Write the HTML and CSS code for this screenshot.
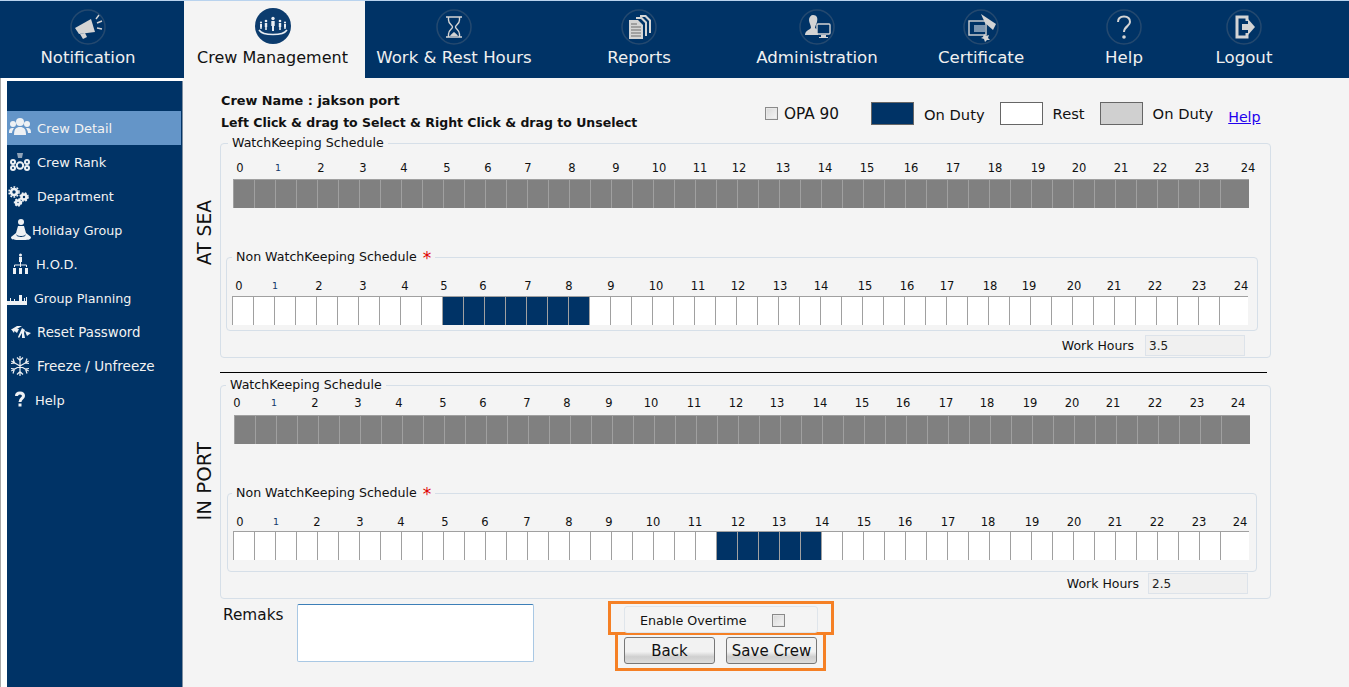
FILE: index.html
```html
<!DOCTYPE html>
<html lang="en">
<head>
    <meta charset="UTF-8">
    <meta name="viewport" content="width=device-width, initial-scale=1.0">
    <title>Crew Management</title>
    <link rel="stylesheet" href="styles.css">
</head>
<body>
    <!-- Top navigation -->
    <nav class="topnav">
        <a class="nav-item nav-notification">
            <svg class="nav-icon" viewBox="0 0 36 36"><circle class="ring" cx="18" cy="18" r="17"/><path class="fill" d="M5 19 21 10 25 23 9 25Z"/><path class="fill" d="M10 25 15 24 17 28 13 30Z"/><path class="line" d="M26 10 29 6M27 14 32 12M27 19 32 20"/></svg>
            <span>Notification</span>
        </a>
        <a class="nav-item nav-crew active">
            <svg class="nav-icon" viewBox="0 0 36 36"><circle class="disc" cx="18" cy="18" r="18"/><g class="people"><circle cx="18" cy="10.5" r="1.7"/><path d="M16.300 13H19.700V18H19V23H17V18H16.300Z"/><circle cx="11" cy="13" r="1.3"/><path d="M9.800 15H12.200V19H11.800V22H10.200V19H9.800Z"/><circle cx="25" cy="13" r="1.300"/><path d="M23.800 15H26.200V19H25.800V22H24.200V19H23.800Z"/><circle cx="6" cy="14.500" r="1.100"/><path d="M5 16H7V19.500H6.700V21H5.300V19.500H5Z"/><circle cx="30" cy="14.500" r="1.100"/><path d="M29 16H31V19.500H30.700V21H29.300V19.500H29Z"/></g><path class="arc" d="M4 22C8 28 28 28 32 22"/></svg>
            <span>Crew Management</span>
        </a>
        <a class="nav-item nav-work">
            <svg class="nav-icon" viewBox="0 0 36 36"><circle class="ring" cx="18" cy="18" r="17"/><path class="line" d="M10 8H26M10 28H26M12.500 8V11C12.500 15 16.500 16 16.500 18C16.500 20 12.500 21 12.500 25V28M23.500 8V11C23.500 15 19.500 16 19.500 18C19.500 20 23.500 21 23.500 25V28"/><path class="fill" d="M14 27C15 25 17 24 18 23 19 24 21 25 22 27Z"/></svg>
            <span>Work &amp; Rest Hours</span>
        </a>
        <a class="nav-item nav-reports">
            <svg class="nav-icon" viewBox="0 0 36 36"><circle class="ring" cx="18" cy="18" r="17"/><path class="fill" d="M19 6H25L30 11V24H28V12L24 8H19Z"/><path class="fill" d="M15 8H21L26 13V27H24V14L20 10H15Z"/><path class="fill" d="M8 11H17L22 16V30H8Z"/><path class="cut" d="M10 15H16M10 18H20M10 21H20M10 24H20M10 27H20"/></svg>
            <span>Reports</span>
        </a>
        <a class="nav-item nav-admin">
            <svg class="nav-icon" viewBox="0 0 36 36"><circle class="ring" cx="18" cy="18" r="17"/><path class="fill" d="M14 6C18 6 19 9 18 13 17 16 16 17 16 19L19 21V26H6C6 22 10 21 12 19 12 16 10 14 10 11 10 8 12 6 14 6Z"/><rect class="screen" x="18" y="15" width="13" height="10" rx="1"/><path class="fill" d="M22 26H27V28H29V29H20V28H22Z"/></svg>
            <span>Administration</span>
        </a>
        <a class="nav-item nav-cert">
            <svg class="nav-icon" viewBox="0 0 36 36"><circle class="ring" cx="18" cy="18" r="17"/><rect class="screen" x="6" y="12" width="17" height="14"/><path class="dim" d="M11 16H22V23H11Z"/><path class="fill" d="M18 5 33 15 30 21 22 14Z"/><path class="fill" d="M21 25 23 27 26 26 25 29 27 31 24 31 22 33 21 30 18 29 20 28Z"/></svg>
            <span>Certificate</span>
        </a>
        <a class="nav-item nav-help">
            <svg class="nav-icon" viewBox="0 0 36 36"><circle class="ring" cx="18" cy="18" r="17"/><path class="question" d="M12 13C12 9 15 7.500 18 7.500 22 7.500 24 10 24 13 24 17 18 17.500 18 23"/><circle class="fill" cx="18" cy="28" r="1.800"/></svg>
            <span>Help</span>
        </a>
        <a class="nav-item nav-logout">
            <svg class="nav-icon" viewBox="0 0 36 36"><circle class="ring" cx="18" cy="18" r="17"/><path class="door" d="M21 12V8H11V28H21V24"/><path class="fill" d="M16 15H22V10L29 18 22 26V21H16Z"/></svg>
            <span>Logout</span>
        </a>
    </nav>

    <div class="page">
        <!-- Side menu -->
        <div class="side-wrap">
            <ul class="side-menu">
                <li class="side-item active">
                    <svg class="side-icon" viewBox="0 0 24 24"><circle cx="12" cy="6" r="4"/><circle cx="5" cy="8" r="3"/><circle cx="19" cy="8" r="3"/><path d="M6 19C6 13 8 11 12 11 16 11 18 13 18 19Z"/><path d="M1 17C1 13 2 12 5 12L6 12C5 14 4 15 4 17Z"/><path d="M23 17C23 13 22 12 19 12L18 12C19 14 20 15 20 17Z"/></svg>
                    <span>Crew Detail</span>
                </li>
                <li class="side-item">
                    <svg class="side-icon" viewBox="0 0 24 24"><path class="dim" d="M9 3H15L14 8H10Z"/><circle class="hole" cx="12" cy="15.500" r="3.200"/><circle class="hole" cx="5" cy="12" r="2"/><circle class="hole" cx="19" cy="12" r="2"/><circle class="hole" cx="5" cy="18" r="2"/><circle class="hole" cx="19" cy="18" r="2"/></svg>
                    <span>Crew Rank</span>
                </li>
                <li class="side-item narrow-text">
                    <svg class="side-icon" viewBox="0 0 24 24"><g class="gear"><circle cx="6" cy="8" r="3"/><circle class="teeth" cx="6" cy="8" r="5"/></g><g class="gear"><circle cx="16" cy="13" r="2.500"/><circle class="teeth" cx="16" cy="13" r="4"/></g><g class="gear"><circle cx="10" cy="18.500" r="2"/><circle class="teeth" cx="10" cy="18.500" r="3.400"/></g></svg>
                    <span>Department</span>
                </li>
                <li class="side-item tight-item narrow-text">
                    <svg class="side-icon" viewBox="0 0 24 24"><circle cx="13" cy="4" r="3"/><path d="M10 8H16L18 15 23 19C23 22 20 22 13 22 6 22 3 22 3 19L8 15Z"/><path class="side-cut" d="M8.500 17C10 19 16 19 17.500 17"/></svg>
                    <span>Holiday Group</span>
                </li>
                <li class="side-item hod-item">
                    <svg class="side-icon" viewBox="0 0 24 24"><circle cx="12.500" cy="3" r="1.500"/><rect x="11" y="5" width="3" height="5"/><path class="stem" d="M12.500 10V13M6.500 15V13H18.500V15M12.500 13V15"/><rect x="5" y="16" width="3" height="6"/><rect x="11" y="16" width="3" height="6"/><rect x="17" y="16" width="3" height="6"/></svg>
                    <span>H.O.D.</span>
                </li>
                <li class="side-item plan-item narrow-text">
                    <svg class="side-icon" viewBox="0 0 24 24"><path d="M0 15 3 15 3 12 4 12 4 15 7 15 7 13 8 13 8 15 12 15 12 9 15 9 15 15 17 15 17 12 18 12 18 15 19 15 19 11 20 11 20 15 20 19H0Z"/></svg>
                    <span>Group Planning</span>
                </li>
                <li class="side-item wide-text">
                    <svg class="side-icon" viewBox="0 0 24 24"><path d="M4 9 9 6 14 6 9 9 11 9 9 13Z"/><path d="M3 9 7 9 6 13Z"/><path d="M14 8 17 10 16 13 17 18 14 18 14 13 11 18 10 17Z"/><path d="M17 11 23 13 19 16Z"/></svg>
                    <span>Reset Password</span>
                </li>
                <li class="side-item wider-text">
                    <svg class="side-icon" viewBox="0 0 24 24"><path class="flake" d="M12 2V22M3.300 7 20.700 17M3.300 17 20.700 7M9 3.500 12 6.500 15 3.500M9 20.500 12 17.500 15 20.500M5 4.500 6.500 9 3 9.500M19 4.500 17.500 9 21 9.500M5 19.500 6.500 15 3 14.500M19 19.500 17.500 15 21 14.500"/></svg>
                    <span>Freeze / Unfreeze</span>
                </li>
                <li class="side-item help-item">
                    <svg class="side-icon" viewBox="0 0 24 24"><path class="side-question" d="M8.500 8C8.500 6 10 5 12 5 14.500 5 15.500 6.500 15.500 8 15.500 10.500 12 10.500 12 14"/><rect x="10.500" y="15.500" width="3" height="3"/></svg>
                    <span>Help</span>
                </li>
            </ul>
        </div>

        <!-- Schedule form -->
        <main class="content">
            <div class="form-head">
                <div class="crew-info">
                    <p class="crew-name">Crew Name : jakson port</p>
                    <p class="crew-hint">Left Click &amp; drag to Select &amp; Right Click &amp; drag to Unselect</p>
                </div>
                <div class="key">
                    <label class="opa"><input type="checkbox" class="check"> OPA 90</label>
                    <span class="swatch swatch-duty"></span>
                    <span class="key-text">On Duty</span>
                    <span class="swatch swatch-rest"></span>
                    <span class="key-text key-up">Rest</span>
                    <span class="swatch swatch-grey"></span>
                    <span class="key-text key-up">On Duty</span>
                    <a class="help-link" href="#">Help</a>
                </div>
            </div>

            <section class="block block-sea">
                <div class="block-title">AT SEA</div>
                <fieldset class="outer">
                    <legend>WatchKeeping Schedule</legend>
                    <div class="schedule schedule-sea-watch" data-key="seaWatch"></div>
                    <fieldset class="inner inner-sea">
                        <legend>Non WatchKeeping Schedule <span class="req">*</span></legend>
                        <div class="schedule schedule-sea-non" data-key="seaNon"></div>
                    </fieldset>
                    <div class="hours hours-sea">
                        <span>Work Hours</span>
                        <input type="text" value="3.5" readonly>
                    </div>
                </fieldset>
            </section>

            <hr class="divider">

            <section class="block block-port">
                <div class="block-title">IN PORT</div>
                <fieldset class="outer">
                    <legend>WatchKeeping Schedule</legend>
                    <div class="schedule schedule-port-watch" data-key="portWatch"></div>
                    <fieldset class="inner inner-port">
                        <legend>Non WatchKeeping Schedule <span class="req">*</span></legend>
                        <div class="schedule schedule-port-non" data-key="portNon"></div>
                    </fieldset>
                    <div class="hours hours-port">
                        <span>Work Hours</span>
                        <input type="text" value="2.5" readonly>
                    </div>
                </fieldset>
            </section>

            <div class="form-foot">
                <label class="remarks-label" for="remarks">Remaks</label>
                <textarea id="remarks" class="remarks"></textarea>
                <div class="actions">
                    <div class="mark mark-overtime">
                        <label class="overtime">Enable Overtime <input type="checkbox" class="check"></label>
                    </div>
                    <div class="mark mark-buttons">
                        <button type="button">Back</button>
                        <button type="button">Save Crew</button>
                    </div>
                </div>
            </div>
        </main>
    </div>

    <script src="schedule.js"></script>
</body>
</html>
```

FILE: styles.css
```css
* {
    box-sizing: border-box;
}

body {
    font-family: "DejaVu Sans", Verdana, sans-serif;
    font-size: 13px;
    color: #111;
    background-color: #f4f4f4;
    margin: 0;
    height: 687px;
    overflow: hidden;
}

/* Top navigation */
.topnav {
    display: flex;
    height: 78px;
    background-color: #003366;
    border-top: 1px solid #b9d3ee;
}

.nav-item {
    display: flex;
    flex-direction: column;
    align-items: center;
    flex: none;
    padding-top: 8px;
    color: #f0f0f0;
    font-size: 16.6px;
}

.nav-item span {
    margin-top: 1px;
    line-height: 24px;
    white-space: nowrap;
}

.nav-item.active {
    background-color: #f4f4f4;
    color: #111;
    font-size: 16px;
    padding-top: 7px;
}

.nav-item.active span {
    margin-top: 2px;
}

.nav-notification { width: 184px; padding-right: 8px; }
.nav-crew { width: 181px; padding-right: 4px; }
.nav-work { width: 178px; }
.nav-reports { width: 192px; }
.nav-admin { width: 164px; }
.nav-cert { width: 164px; }
.nav-help { width: 122px; }
.nav-logout { width: 118px; }

.nav-icon {
    width: 36px;
    height: 36px;
}

.ring {
    fill: none;
    stroke: #24496f;
    stroke-width: 1.5;
}

.disc { fill: #0c3c6e; }
.people { fill: #e8edf2; }
.arc { fill: none; stroke: #e8edf2; stroke-width: 1.5; }
.fill { fill: #d4d4d4; }
.line { fill: none; stroke: #d4d4d4; stroke-width: 1.4; }
.cut { fill: none; stroke: #6c6c6c; stroke-width: 1; }
.screen { fill: #003366; stroke: #d4d4d4; stroke-width: 1.4; }
.dim { fill: #7d96b0; }
.question { fill: none; stroke: #d4d4d4; stroke-width: 2; }
.door { fill: none; stroke: #d4d4d4; stroke-width: 3; }

/* Side menu */
.page {
    display: flex;
    height: 609px;
}

.side-wrap {
    flex: none;
    width: 183px;
    padding: 3px 0 0 6px;
    background-color: #fff;
    border-left: 1px solid #a8a8a8;
}

.side-menu {
    list-style: none;
    margin: 0;
    padding: 30px 0 0;
    height: 100%;
    background-color: #003366;
    border-right: 1px solid #7e8ea0;
}

.side-item {
    display: flex;
    align-items: center;
    height: 34px;
    padding-left: 1px;
    color: #f2f2f2;
    font-size: 13px;
    white-space: nowrap;
}

.side-item.active {
    background-color: #6495c8;
    margin-right: 1px;
}

.side-item.narrow-text { font-size: 12.7px; }
.side-item.wide-text { font-size: 13.3px; }
.side-item.wider-text { font-size: 13.5px; }

.side-item span { margin-left: 5px; }
.tight-item span { margin-left: 0; }
.hod-item span { margin-left: 4px; }
.plan-item { padding-left: 0; }
.plan-item span { margin-left: 3px; }
.help-item span { margin-left: 3px; }

.side-icon {
    flex: none;
    width: 24px;
    height: 24px;
    fill: #eef1f4;
}

.side-icon .dim { fill: #8fa3b8; }
.side-icon .hole { fill: none; stroke: #eef1f4; stroke-width: 2; }
.side-icon .stem { fill: none; stroke: #eef1f4; stroke-width: 1; }
.side-icon .side-cut { fill: none; stroke: #003366; stroke-width: 1; }
.side-icon .gear circle { fill: none; stroke: #eef1f4; stroke-width: 2.6; }
.side-icon .gear .teeth { stroke-width: 1.6; stroke-dasharray: 1.8 1.4; }
.side-icon .flake { fill: none; stroke: #eef1f4; stroke-width: 1.2; }
.side-icon .side-question { fill: none; stroke: #eef1f4; stroke-width: 3; }

/* Form */
.content {
    flex: 1;
    min-width: 0;
    padding: 12px 0 0 12px;
}

.form-head {
    display: flex;
    height: 45px;
    padding-left: 26px;
}

.crew-info {
    flex: none;
    width: 544px;
}

.crew-info p {
    margin: 0;
    font-weight: bold;
    line-height: 22px;
    white-space: nowrap;
}

.crew-name { font-size: 12.85px; }
.crew-hint { font-size: 12.5px; }

.key {
    display: flex;
    align-items: flex-start;
    padding-top: 12px;
}

.opa {
    display: flex;
    align-items: center;
    gap: 6px;
    flex: none;
    width: 106px;
    height: 23px;
    font-size: 15.3px;
    white-space: nowrap;
}

.check {
    appearance: none;
    width: 13px;
    height: 13px;
    margin: 0;
    border: 1px solid #8a8a8a;
    background: linear-gradient(135deg, #d8d8d8, #f6f6f6);
    box-shadow: inset 0 0 0 1px #e8e8e8;
}

.swatch {
    flex: none;
    width: 43px;
    height: 23px;
    border: 1px solid #666;
}

.swatch-duty { background-color: #003366; }
.swatch-rest { background-color: #fff; }
.swatch-grey { background-color: #d0d0d0; }

.key-text {
    flex: none;
    font-size: 14.7px;
    line-height: 26px;
    margin: 0 15px 0 10px;
    white-space: nowrap;
}

.key-text.key-up { line-height: 23px; }

.help-link {
    color: #2200ee;
    font-size: 14.2px;
    line-height: 30px;
}

/* AT SEA / IN PORT blocks */
.block {
    display: flex;
    align-items: flex-start;
}

.block-title {
    flex: none;
    width: 25px;
    writing-mode: vertical-rl;
    transform: rotate(180deg);
    line-height: 20px;
    text-align: left;
    white-space: nowrap;
}

.block-sea .block-title { margin-top: 65px; font-size: 18.7px; }
.block-port .block-title { margin-top: 65px; font-size: 19.7px; }

.outer,
.inner {
    margin: 0;
    padding: 0;
    min-width: 0;
    border: 1px solid #d6dfe8;
    border-radius: 4px;
}

.outer {
    width: 1051px;
}

.block-sea .outer { height: 223px; }
.block-port .outer { height: 222px; }

legend {
    margin-left: 7px;
    padding: 0 4px;
    font-size: 12.6px;
    line-height: 16px;
    white-space: nowrap;
}

.block-port .outer > legend { margin-left: 5px; }

.inner {
    margin: 41px 12px 0 5px;
}

.inner-sea { height: 82px; }
.inner-port { height: 87px; margin-left: 6px; margin-right: 13px; }

.inner legend { margin-left: 5px; }
.inner-port legend { margin-left: 4px; }

.req {
    color: #e00000;
    font-size: 17px;
    line-height: 12px;
    margin-left: 2px;
    vertical-align: -3px;
}

.schedule {
    width: 1016px;
}

.schedule-sea-watch { margin: 6px 0 0 12px; }
.schedule-sea-non { margin: 10px 0 0 5px; }
.schedule-port-watch { margin: -2px 0 0 13px; }
.schedule-port-non { margin: 10px 0 0 5px; }

.hour-row {
    display: flex;
    height: 22px;
    font-size: 11.5px;
    line-height: 22px;
    white-space: nowrap;
}

.schedule-port-watch .hour-row {
    height: 24px;
    line-height: 24px;
}

.schedule-sea-non .hour-row { height: 21px; }
.schedule-port-non .hour-row { height: 20px; }

.hour-row span {
    flex: none;
    width: 20px;
    text-align: center;
}

.hour-row .one {
    font-size: 9.5px;
    color: #123a6a;
}

.cell-row {
    display: flex;
    height: 29px;
    border-top: 1px solid #a0a0a0;
}

.cell {
    flex: 0 0 21px;
    border-left: 1px solid #a0a0a0;
    background-color: #fff;
}

.cell:last-child {
    flex: 1;
}

.cell-row.watch .cell {
    background-color: #808080;
}

.cell.on {
    background-color: #003366;
}

.hours {
    display: flex;
    justify-content: flex-end;
    align-items: center;
    gap: 11px;
    font-size: 12.5px;
}

.hours-sea { margin: 4px 25px 0 0; }
.hours-port { margin: 1px 22px 0 0; gap: 9px; }

.hours input {
    width: 100px;
    height: 21px;
    padding: 0 3px;
    font: inherit;
    font-size: 12px;
    color: #222;
    background-color: #f0f0f0;
    border: 1px solid #dde3ea;
}

.divider {
    width: 1047px;
    height: 1px;
    margin: 14px 0 4px 25px;
    border: 0;
    background-color: #000;
}

/* Bottom row */
.form-foot {
    display: flex;
    align-items: flex-start;
    padding: 5px 0 0 28px;
}

.remarks-label {
    flex: none;
    width: 74px;
    padding-top: 2px;
    font-size: 15.3px;
}

.remarks {
    flex: none;
    width: 237px;
    height: 58px;
    background-color: #fff;
    border: 1px solid #a9c8e4;
    border-top-color: #3c7fb8;
    border-radius: 2px;
    resize: none;
}

.actions {
    display: flex;
    flex-direction: column;
    align-items: flex-start;
    margin: -3px 0 0 74px;
}

.mark {
    border: 3px solid #f58025;
}

.mark-overtime {
    width: 226px;
    height: 34px;
    padding: 2px 13px;
}

.overtime {
    display: flex;
    align-items: center;
    gap: 26px;
    height: 27px;
    padding: 1px 0 0 15px;
    font-size: 12.7px;
    border: 1px solid #dfe5eb;
    border-radius: 3px;
    white-space: nowrap;
}

.mark-buttons {
    display: flex;
    gap: 11px;
    width: 211px;
    height: 36px;
    margin-left: 7px;
    padding: 0 6px;
    border-top: 0;
}

button {
    width: 91px;
    height: 27px;
    margin-top: 2px;
    padding: 0;
    font: inherit;
    font-size: 15px;
    color: #111;
    background: linear-gradient(#f2f2f2 55%, #cfcfcf 75%, #dcdcdc);
    border: 1px solid #777;
    border-radius: 3px;
}
```

FILE: schedule.js
```js
// Left edge of each grid and where its hour numbers sit on screen
var schedules = {
    seaWatch: {
        left: 233, watch: true, on: [],
        labels: [240, 278, 321, 363, 404, 447, 488, 528, 572, 616, 659, 700, 739, 783, 825, 867, 911, 953, 995, 1038, 1079, 1121, 1160, 1202, 1248]
    },
    seaNon: {
        left: 232, watch: false, on: [10, 17],
        labels: [239, 275, 319, 363, 405, 444, 483, 528, 569, 611, 656, 698, 738, 780, 821, 865, 907, 947, 990, 1029, 1074, 1114, 1155, 1199, 1241]
    },
    portWatch: {
        left: 234, watch: true, on: [],
        labels: [237, 274, 315, 358, 399, 443, 483, 527, 567, 609, 651, 694, 736, 777, 820, 862, 903, 946, 987, 1030, 1072, 1113, 1155, 1197, 1238]
    },
    portNon: {
        left: 233, watch: false, on: [23, 28],
        labels: [240, 276, 317, 360, 401, 445, 485, 527, 569, 609, 653, 695, 738, 779, 822, 864, 905, 948, 988, 1032, 1074, 1115, 1157, 1199, 1240]
    }
};

document.querySelectorAll('.schedule').forEach(function (el) {
    var s = schedules[el.dataset.key];

    var hours = document.createElement('div');
    hours.className = 'hour-row';
    var edge = s.left;
    s.labels.forEach(function (x, i) {
        var span = document.createElement('span');
        span.textContent = i;
        if (i === 1) {
            span.className = 'one';
        }
        // each number is 20px wide, the margin puts it under its own x
        span.style.marginLeft = (x - 10 - edge) + 'px';
        hours.appendChild(span);
        edge = x + 10;
    });
    el.appendChild(hours);

    var cells = document.createElement('div');
    cells.className = s.watch ? 'cell-row watch' : 'cell-row';
    for (var i = 0; i < 48; i++) {
        var cell = document.createElement('div');
        cell.className = i >= s.on[0] && i < s.on[1] ? 'cell on' : 'cell';
        cells.appendChild(cell);
    }
    el.appendChild(cells);
});
```
